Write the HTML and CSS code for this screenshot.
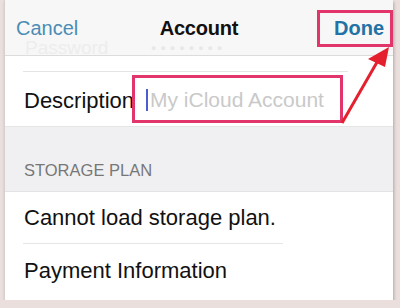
FILE: index.html
```html
<!DOCTYPE html>
<html lang="en">
<head>
    <meta charset="UTF-8">
    <title>Account</title>
    <link rel="stylesheet" href="styles.css">
</head>
<body>
    <div class="frame">
        <div class="navbar">
            <div class="nav-row">
                <span class="nav-cancel">Cancel</span>
                <span class="nav-title">Account</span>
                <span class="nav-done">Done</span>
            </div>
            <div class="ghost-row">
                <span class="ghost-label">Password</span>
                <span class="ghost-dots">●●●●●●●●</span>
            </div>
        </div>

        <div class="group">
            <div class="row-tail"></div>
            <div class="row row-field">
                <span class="row-label">Description</span>
                <span class="field"><span class="caret"></span>My iCloud Account</span>
            </div>
        </div>

        <div class="section-header">STORAGE PLAN</div>

        <div class="group">
            <div class="row row-first">Cannot load storage plan.</div>
            <div class="row row-last">Payment Information</div>
        </div>

        <!-- annotation arrow pointing at Done -->
        <svg class="arrow" width="400" height="140" viewBox="0 0 400 140">
            <line x1="341" y1="123" x2="379" y2="57" stroke="#e5202e" stroke-width="3"/>
            <polygon points="388,47 367,59 384,67" fill="#e5202e"/>
        </svg>
    </div>
</body>
</html>
```

FILE: styles.css
```css
body {
    margin: 0;
    background: #eadfdc;
    font-family: 'Liberation Sans', Arial, sans-serif;
    color: #111;
}
.frame {
    position: relative;
    width: 388px;
    height: 300px;
    margin-left: 4px;
    background: #fff;
    border-left: 1px solid #d6d0cf;
    box-shadow: 1px 2px 3px rgba(0, 0, 0, 0.25);
    overflow: hidden;
}
.navbar {
    height: 56px;
    background: #f7f7f7;
    border-bottom: 1px solid #dcdcdc;
    padding-top: 17px;
    box-sizing: border-box;
}
.nav-row {
    display: grid;
    grid-template-columns: 1fr auto 1fr;
    align-items: center;
    height: 23px;
    font-size: 20px;
    line-height: 23px;
}
.nav-cancel {
    padding-left: 11px;
    color: #4b8db4;
}
.nav-title {
    font-weight: bold;
    letter-spacing: -0.2px;
}
.nav-done {
    justify-self: end;
    width: 64px;
    height: 31px;
    margin: -7px 0;
    border: 3px solid #e2356c;
    color: #2272a6;
    font-weight: bold;
    line-height: 31px;
    text-align: right;
    padding-right: 6px;
    box-sizing: content-box;
}
.ghost-row {
    display: flex;
    align-items: center;
    height: 16px;
    font-size: 19px;
    color: #ededed;
}
.ghost-label {
    padding-left: 20px;
    width: 126px;
}
.ghost-dots {
    font-size: 9px;
    letter-spacing: 4px;
    color: #e8e8e8;
}
.group {
    background: #fff;
}
.row-tail {
    height: 15px;
    margin-left: 18px;
    margin-right: 45px;
    border-bottom: 1px solid #e4e4e4;
}
.row {
    display: flex;
    align-items: center;
    padding-left: 19px;
    font-size: 22px;
}
.row-field {
    height: 54px;
}
.row-label {
    width: 108px;
    overflow: hidden;
    white-space: nowrap;
    padding-top: 4px;
}
.field {
    display: flex;
    align-items: center;
    width: 205px;
    height: 40px;
    border: 3px solid #e2356c;
    color: #c9c9c9;
    font-size: 21px;
    padding-top: 2px;
}
.caret {
    width: 2px;
    height: 22px;
    margin: 0 2px 0 11px;
    background: #4c5fd0;
}
.section-header {
    height: 66px;
    box-sizing: border-box;
    padding: 0 0 11px 19px;
    display: flex;
    align-items: flex-end;
    background: #f0f0f2;
    border-top: 1px solid #e6e6e6;
    border-bottom: 1px solid #e3e3e3;
    color: #777;
    font-size: 16.5px;
}
.row-first {
    height: 52px;
    position: relative;
}
.row-first::after {
    content: "";
    position: absolute;
    left: 18px;
    right: 110px;
    bottom: 0;
    border-bottom: 1px solid #e6e6e6;
}
.row-last {
    height: 54px;
}
.arrow {
    position: absolute;
    left: -4px;
    top: 0;
}
```
